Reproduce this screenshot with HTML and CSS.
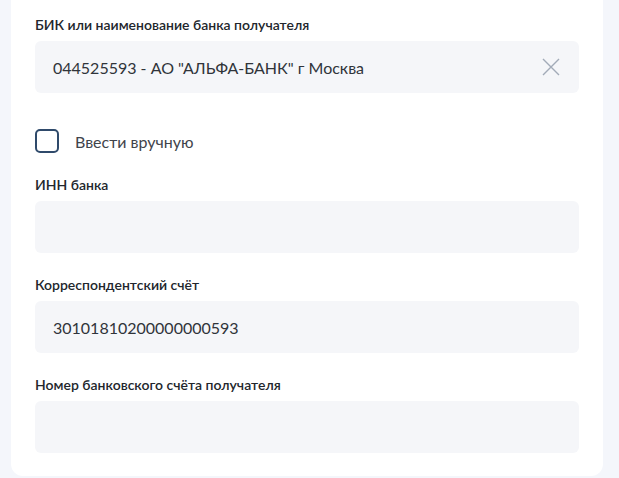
FILE: index.html
```html
<!DOCTYPE html>
<html lang="ru">
<head>
<meta charset="utf-8">
<link rel="stylesheet" href="styles.css">
</head>
<body>
<div class="card">
  <div class="group">
    <div class="label">БИК или наименование банка получателя</div>
    <div class="field">
      <span class="value">044525593 - АО "АЛЬФА-БАНК" г Москва</span>
      <svg class="clear" width="18" height="18" viewBox="0 0 18 18"><path d="M1 1L17 17M17 1L1 17" stroke="#a2abb8" stroke-width="1.4" fill="none"/></svg>
    </div>
  </div>
  <label class="check">
    <span class="box"></span>
    <span class="check-text">Ввести вручную</span>
  </label>
  <div class="group">
    <div class="label">ИНН банка</div>
    <div class="field"></div>
  </div>
  <div class="group">
    <div class="label">Корреспондентский счёт</div>
    <div class="field"><span class="value">30101810200000000593</span></div>
  </div>
  <div class="group">
    <div class="label">Номер банковского счёта получателя</div>
    <div class="field"></div>
  </div>
</div>
</body>
</html>
```

FILE: styles.css
```css
html, body {
  margin: 0;
  padding: 0;
}
body {
  background: #f4f6fb;
  font-family: Lato, "Noto Sans", sans-serif;
  height: 478px;
  overflow: hidden;
}
.card {
  margin: 0 16px 0 11px;
  background: #ffffff;
  border-radius: 0 0 12px 12px;
  padding: 15px 24px 23px;
  display: flex;
  flex-direction: column;
}
.group {
  display: flex;
  flex-direction: column;
  gap: 6px;
  margin-bottom: 22px;
}
.group:last-child {
  margin-bottom: 0;
}
.label {
  font-size: 14px;
  line-height: 20px;
  font-weight: 600;
  color: #22262c;
}
.field {
  height: 52px;
  background: #f5f6f9;
  border-radius: 6px;
  display: flex;
  align-items: center;
  padding: 0 18px;
  box-sizing: border-box;
}
.value {
  flex: 1;
  font-size: 16px;
  color: #30343a;
}
.clear {
  flex: none;
  margin-right: 1px;
}
.check {
  display: flex;
  align-items: center;
  gap: 16px;
  height: 24px;
  margin: 14px 0 22px;
}
.box {
  width: 24px;
  height: 24px;
  box-sizing: border-box;
  border: 2px solid #2f4a6b;
  border-radius: 5px;
}
.check-text {
  font-size: 16px;
  color: #3f444b;
}
```
